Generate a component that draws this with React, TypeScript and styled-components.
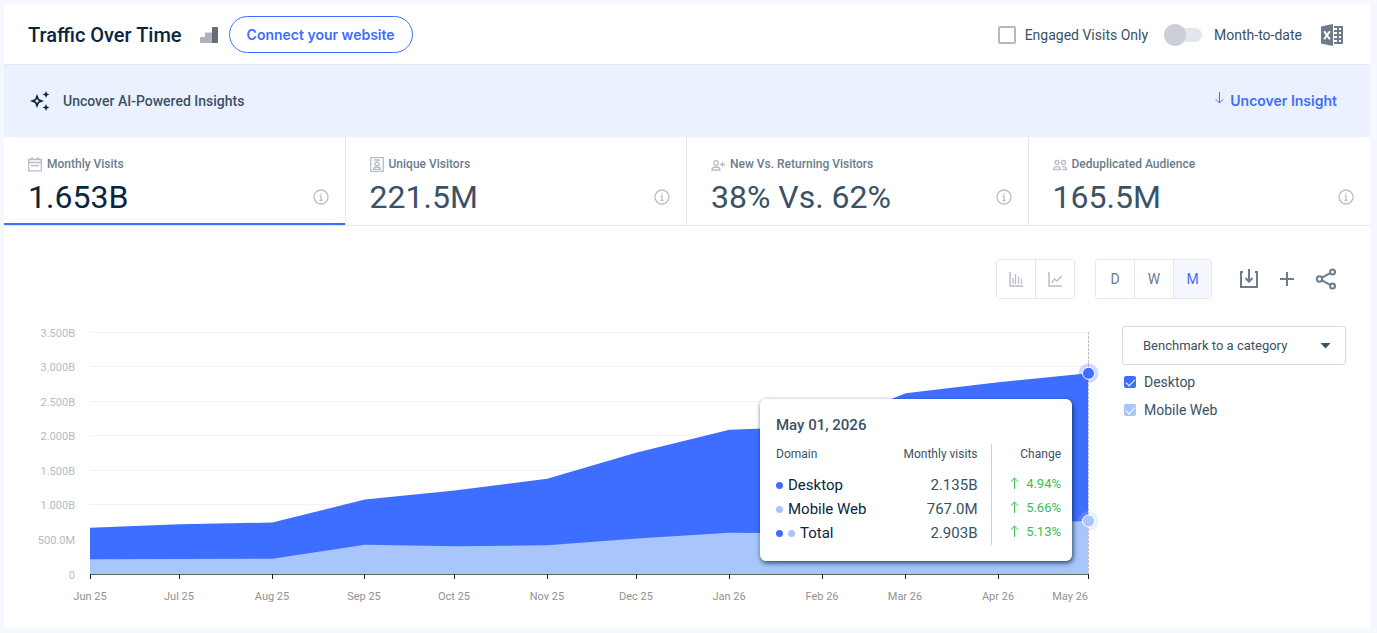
import React from 'react'
import styled, { createGlobalStyle } from 'styled-components'

const colors = {
  blue: '#3e6eff',
  lightBlue: '#a8c5fc',
  green: '#3bbd50',
  ink: '#092540',
  text: '#3a5166',
  muted: '#6b7c8c',
  icon: '#b8bec9',
  border: '#e5e7ea',
}

const GlobalStyle = createGlobalStyle`
  * {
    box-sizing: border-box;
  }

  body {
    background: #f5f8ff;
    color: ${colors.text};
    font-family: Roboto, 'Liberation Sans', sans-serif;
    font-size: 14px;
    margin: 0;
  }

  button,
  input,
  select {
    color: inherit;
    font: inherit;
    margin: 0;
  }

  svg {
    display: block;
    flex: none;
  }
`

const Card = styled.main`
  background: #fff;
  margin: 5px 7px 6px 4px;
`

const Header = styled.header`
  align-items: center;
  border-bottom: 1px solid ${colors.border};
  display: flex;
  height: 60px;
  justify-content: space-between;
  padding: 0 27px 0 24px;
`

const HeaderGroup = styled.div`
  align-items: center;
  display: flex;
`

const Title = styled.h1`
  color: ${colors.ink};
  font-size: 20px;
  font-weight: 500;
  line-height: 24px;
  margin: 0 18px 0 0;
`

const ConnectButton = styled.button`
  background: #fff;
  border: 1px solid ${colors.blue};
  border-radius: 20px;
  color: ${colors.blue};
  cursor: pointer;
  font-family: Inter, sans-serif;
  font-weight: 600;
  height: 37px;
  margin-left: 11px;
  padding: 0 17px;
`

const OptionLabel = styled.label`
  align-items: center;
  cursor: pointer;
  display: flex;
  gap: 9px;
`

const SquareCheckbox = styled.input`
  appearance: none;
  background: #fff;
  border: 2px solid #b0b8c9;
  border-radius: 2px;
  height: 18px;
  width: 18px;
`

const SwitchLabel = styled(OptionLabel)`
  gap: 12px;
  margin: 0 19px 0 16px;
`

const Switch = styled.input`
  align-items: center;
  appearance: none;
  background: #e4e7ea;
  border-radius: 7px;
  display: flex;
  height: 14px;
  width: 38px;

  &::before {
    background: #cbd0d6;
    border-radius: 100%;
    content: '';
    flex: none;
    height: 22px;
    width: 22px;
  }

  &:checked {
    justify-content: flex-end;
  }
`

const IconButton = styled.button`
  background: none;
  border: 0;
  cursor: pointer;
  padding: 0;
`

const Banner = styled.section`
  align-items: center;
  background: #ebf1ff;
  display: flex;
  height: 72px;
  padding: 0 33px 0 25px;
`

const BannerText = styled.span`
  flex: 1;
  font-weight: 500;
  margin-left: 12px;
`

const InsightLink = styled.a`
  align-items: center;
  color: ${colors.blue};
  display: flex;
  font-family: Inter, sans-serif;
  font-weight: 600;
  gap: 6px;
  padding-bottom: 2px;
  text-decoration: none;

  svg {
    margin-bottom: 4px;
  }
`

const Stats = styled.section`
  display: grid;
  grid-template-columns: repeat(4, 1fr);
`

const StatTab = styled.button<{ $active?: boolean }>`
  background: #fff;
  border: 0;
  border-bottom: 1px solid ${colors.border};
  border-right: 1px solid ${colors.border};
  box-shadow: ${({ $active }) =>
    $active ? `inset 0 -2px ${colors.blue}` : 'none'};
  color: ${({ $active }) => ($active ? colors.ink : colors.text)};
  cursor: pointer;
  display: flex;
  flex-direction: column;
  height: 89px;
  padding: 18px 16px 0 24px;
  text-align: left;

  &:last-child {
    border-right: 0;
  }
`

const StatLabel = styled.span`
  align-items: center;
  color: ${colors.muted};
  display: flex;
  font-size: 12px;
  font-weight: 500;
  gap: 5px;
  line-height: 18px;
`

const StatRow = styled.span`
  align-items: center;
  display: flex;
  font-size: 32px;
  justify-content: space-between;
  line-height: 48px;
  width: 100%;
`

const Body = styled.section`
  padding: 33px 24px 18px;
`

const Toolbar = styled.div`
  align-items: center;
  color: #6b7c8c;
  display: flex;
  justify-content: flex-end;
  padding-right: 9px;
`

const ButtonGroup = styled.div`
  border: 1px solid ${colors.border};
  border-radius: 3px;
  display: flex;
  height: 40px;
  margin-right: 20px;
`

const GroupButton = styled.button<{ $active?: boolean }>`
  align-items: center;
  background: ${({ $active }) => ($active ? '#f5f8ff' : '#fff')};
  border: 0;
  color: ${({ $active }) => ($active ? colors.blue : colors.muted)};
  cursor: pointer;
  display: flex;
  justify-content: center;
  padding: 0;
  width: 38px;

  & + & {
    border-left: 1px solid ${colors.border};
    width: 39px;
  }

  && + & + & {
    width: 38px;
  }
`

const Actions = styled.div`
  align-items: center;
  display: flex;
  gap: 19px;
  margin-left: 7px;
`

const ChartRow = styled.div`
  display: flex;
  gap: 20px;
  margin-top: 20px;
`

const ChartBox = styled.div`
  flex: 1;
  height: 290px;
  min-width: 0;
  position: relative;
`

const AxisText = styled.text<{ $vertical?: boolean }>`
  fill: ${({ $vertical }) => ($vertical ? '#b3bbc3' : '#919191')};
  font-size: 11px;
`

const Legend = styled.aside`
  padding-top: 7px;
  width: 224px;
`

const SelectBox = styled.div`
  align-items: center;
  border: 1px solid #d6dae0;
  border-radius: 3px;
  display: grid;
  height: 39px;
  margin-bottom: 3px;

  > * {
    grid-area: 1 / 1;
  }

  svg {
    justify-self: end;
    margin-right: 14px;
    pointer-events: none;
  }
`

const Select = styled.select`
  appearance: none;
  background: none;
  border: 0;
  cursor: pointer;
  font-size: 13px;
  height: 37px;
  padding: 0 20px;
  width: 100%;
`

const LegendItem = styled.label`
  align-items: center;
  cursor: pointer;
  display: flex;
  gap: 8px;
  height: 28px;
  padding-left: 2px;
`

const LegendCheckbox = styled.input<{ $color: string }>`
  appearance: none;
  background: ${({ $color }) => $color};
  border-radius: 2px;
  display: grid;
  height: 12px;
  place-content: center;
  width: 12px;

  &:checked::before {
    border: solid #fff;
    border-width: 0 0 1px 1px;
    content: '';
    height: 4px;
    margin-bottom: 2px;
    transform: rotate(-45deg);
    width: 8px;
  }
`

const Tooltip = styled.div`
  background: #fff;
  border-radius: 6px;
  box-shadow: 1px 2px 5px rgba(9, 37, 64, 0.8);
  height: 162px;
  padding: 16px 11px 0 16px;
  position: absolute;
  right: 30px;
  top: 80px;
  width: 312px;
`

const TooltipTitle = styled.div`
  font-size: 15px;
  font-weight: 500;
  line-height: 20px;
  margin-bottom: 9px;
`

const TooltipTable = styled.table`
  border-collapse: collapse;
  width: 100%;

  th {
    font-size: 12px;
    font-weight: 400;
    height: 29px;
    line-height: 20px;
    padding: 0;
    text-align: right;
    vertical-align: top;
  }

  th:first-child {
    text-align: left;
  }

  th:last-child {
    width: 70px;
  }

  td {
    font-size: 15px;
    height: 24px;
    line-height: 24px;
    padding: 0;
    text-align: right;
  }

  th:nth-child(2),
  td:nth-child(2) {
    border-right: 1px solid #ccd1d9;
    padding-right: 13px;
  }
`

const DomainCell = styled.span`
  align-items: center;
  color: ${colors.ink};
  display: flex;
  gap: 5px;
`

const Dot = styled.i<{ $color: string }>`
  background: ${({ $color }) => $color};
  border-radius: 100%;
  height: 7px;
  width: 7px;
`

const Change = styled.span`
  align-items: center;
  color: ${colors.green};
  display: flex;
  font-size: 13px;
  gap: 7px;
  justify-content: flex-end;
  line-height: 20px;
  padding-bottom: 3px;

  svg {
    margin-bottom: 2px;
  }
`

const SignalIcon = () => (
  <svg width="18" height="16" viewBox="0 0 18 16">
    <path d="M0 11a1 1 0 0 1 1-1h4V6.500a1 1 0 0 1 1-1h6V16H1a1 1 0 0 1-1-1z" fill="#adb3bd" />
    <path d="M12 1a1 1 0 0 1 1-1h4a1 1 0 0 1 1 1v14a1 1 0 0 1-1 1h-5z" fill="#646d7b" />
  </svg>
)

const ExcelIcon = () => (
  <svg width="22" height="22" viewBox="0 0 22 22">
    <path d="M0 2.500 12 0v22L0 19.500z" fill="#6b7c8c" />
    <path d="M3.200 7.200l5.600 8M8.800 7.200l-5.600 8" stroke="#fff" strokeWidth="2" />
    <path d="M13 2h8a1 1 0 0 1 1 1v16a1 1 0 0 1-1 1h-8z" fill="#6b7c8c" />
    <path
      d="M14 4h2v2h-2zM18 4h2v2h-2zM14 8h2v2h-2zM18 8h2v2h-2zM14 12h2v2h-2zM18 12h2v2h-2zM14 16h2v2h-2zM18 16h2v2h-2z"
      fill="#fff"
    />
    <path d="M13 4h1v2h-1zM13 8h1v2h-1zM13 12h1v2h-1zM13 16h1v2h-1z" fill="#fff" />
  </svg>
)

const SparkleIcon = () => (
  <svg width="22" height="22" viewBox="0 0 22 22" fill={colors.ink}>
    <path
      fillRule="evenodd"
      d="M8 4 10 9l5 2-5 2-2 5-2-5-5-2 5-2zM8 8.500 7.200 10.200 5.500 11l1.700.8.8 1.700.8-1.700L10.500 11l-1.700-.8z"
    />
    <path d="m17 1 1 2.500 2.500 1-2.500 1-1 2.500-1-2.500-2.500-1 2.500-1zM17 14l1 2.500 2.500 1-2.500 1-1 2.500-1-2.500-2.500-1 2.500-1z" />
  </svg>
)

const ArrowIcon = ({ down }: { down?: boolean }) => (
  <svg width="9" height="12" viewBox="0 0 9 12" fill="none" stroke="currentColor">
    {down ? (
      <path d="M4.500 0v11M.700 7.200l3.800 3.800 3.800-3.800" />
    ) : (
      <path d="M4.500 12V1M.700 4.800 4.500 1l3.800 3.800" />
    )}
  </svg>
)

const CalendarIcon = () => (
  <svg width="14" height="15" viewBox="0 0 14 15" fill="none" stroke={colors.icon}>
    <path d="M.7 2.500h12.600v11.300H.7zM1 5.500h12M3 8.500h8" strokeWidth="1.300" />
    <path d="M4 .5v2M10 .5v2" strokeWidth="2.500" />
  </svg>
)

const VisitorIcon = () => (
  <svg width="14" height="15" viewBox="0 0 14 15" fill="none" stroke={colors.icon} strokeWidth="1.300">
    <path d="M.7.7h12.600v13.600H.7zM4 3h6M3.500 12.300c0-1.800 1.500-2.300 3.500-2.300s3.500.5 3.500 2.300z" />
    <circle cx="7" cy="7" r="2" />
  </svg>
)

const NewVisitorIcon = () => (
  <svg width="14" height="15" viewBox="0 0 14 15" fill="none" stroke={colors.icon} strokeWidth="1.300">
    <circle cx="5" cy="6" r="2.300" />
    <path d="M1 13c0-2.500 1.700-3 4-3s4 .5 4 3zM11.500 5v5M9 7.500h5" />
  </svg>
)

const AudienceIcon = () => (
  <svg width="14" height="15" viewBox="0 0 14 15" fill="none" stroke={colors.icon} strokeWidth="1.300">
    <circle cx="4" cy="5.500" r="2" />
    <circle cx="10.500" cy="5.500" r="2" />
    <path d="M.7 12.500C.7 10 2 9.600 4 9.600s3.500.4 3.500 2.900zM9 9.600c3-.3 4.500.4 4.500 2.900h-4" />
  </svg>
)

const InfoIcon = () => (
  <svg width="16" height="16" viewBox="0 0 16 16" fill="none" stroke={colors.icon} strokeWidth="1.300">
    <circle cx="8" cy="8" r="7" />
    <path d="M6.500 7.200H8v4M6.500 11.500h3M8 4.200v1.300" />
  </svg>
)

const BarsIcon = () => (
  <svg width="14" height="15" viewBox="0 0 14 15" fill="none" stroke={colors.icon}>
    <path d="M1 0v14h13" strokeWidth="1.500" />
    <path d="M4 12V6M6.500 12V2M9.500 12V4.500M12.500 12V7" strokeWidth="1.300" />
  </svg>
)

const LineIcon = () => (
  <svg width="14" height="15" viewBox="0 0 14 15" fill="none" stroke={colors.icon}>
    <path d="M1 0v14h13" strokeWidth="1.500" />
    <path d="m3.500 11 3-4 2.500 2 4.500-5" strokeWidth="1.300" />
  </svg>
)

const DownloadIcon = () => (
  <svg width="20" height="20" viewBox="0 0 20 20" fill="none" stroke="currentColor" strokeWidth="2">
    <path d="M4 3H2v15h16V3h-2M10 0v12M6.500 9l3.500 3.500L13.500 9" />
  </svg>
)

const PlusIcon = () => (
  <svg width="18" height="18" viewBox="0 0 18 18" stroke="currentColor" strokeWidth="2">
    <path d="M9 2v14M2 9h14" />
  </svg>
)

const ShareIcon = () => (
  <svg width="22" height="22" viewBox="0 0 22 22" fill="none" stroke="currentColor" strokeWidth="2">
    <circle cx="4.500" cy="11" r="2.700" />
    <circle cx="17.500" cy="4" r="2.500" />
    <circle cx="17.500" cy="18" r="2.500" />
    <path d="m7 9.700 8.200-4.500M7 12.300l8.200 4.500" />
  </svg>
)

const CaretIcon = () => (
  <svg width="11" height="6" viewBox="0 0 11 6">
    <path d="M.5 0h10l-5 5.500z" fill={colors.text} />
  </svg>
)

// day: days since the first month, values in millions
const points = [
  { label: 'Jun 25', day: 0, mobile: 213, total: 668 },
  { label: 'Jul 25', day: 30, mobile: 217, total: 718 },
  { label: 'Aug 25', day: 61, mobile: 222, total: 744 },
  { label: 'Sep 25', day: 92, mobile: 422, total: 1077 },
  { label: 'Oct 25', day: 122, mobile: 400, total: 1206 },
  { label: 'Nov 25', day: 153, mobile: 417, total: 1376 },
  { label: 'Dec 25', day: 183, mobile: 515, total: 1757 },
  { label: 'Jan 26', day: 214, mobile: 595, total: 2088 },
  { label: 'Feb 26', day: 245, mobile: 590, total: 2130 },
  { label: 'Mar 26', day: 273, mobile: 700, total: 2615 },
  { label: 'Apr 26', day: 304, mobile: 726, total: 2775 },
  { label: 'May 26', day: 334, mobile: 767, total: 2903 },
]

const gridLabels = [
  '0',
  '500.0M',
  '1.000B',
  '1.500B',
  '2.000B',
  '2.500B',
  '3.000B',
  '3.500B',
]

const plot = { left: 62, right: 14, top: 13, bottom: 255 }

const yOf = (value: number) =>
  plot.bottom - (value / 3500) * (plot.bottom - plot.top)

const tooltipRows = [
  { name: 'Desktop', dots: [colors.blue], visits: '2.135B', change: '4.94%' },
  { name: 'Mobile Web', dots: [colors.lightBlue], visits: '767.0M', change: '5.66%' },
  { name: 'Total', dots: [colors.blue, colors.lightBlue], visits: '2.903B', change: '5.13%' },
]

const TrafficChart: React.FunctionComponent = () => {
  const box = React.useRef<HTMLDivElement>(null)
  const [width, setWidth] = React.useState(1074)

  React.useLayoutEffect(() => {
    const node = box.current
    if (!node) return
    const update = () => setWidth(node.clientWidth)
    update()
    const observer = new ResizeObserver(update)
    observer.observe(node)
    return () => observer.disconnect()
  }, [])

  const end = width - plot.right
  const xOf = (day: number) => plot.left + (day / 334) * (end - plot.left)
  const area = (key: 'mobile' | 'total') =>
    `M${plot.left} ${plot.bottom}` +
    points.map(p => `L${xOf(p.day)} ${yOf(p[key])}`).join('') +
    `L${end} ${plot.bottom}Z`

  return (
    <ChartBox ref={box}>
      <svg width={width} height="290">
        {gridLabels.map((label, i) => {
          const y = Math.floor(yOf(i * 500)) + 0.5
          return (
            <g key={label}>
              <line x1={plot.left} x2={end} y1={y} y2={y} stroke="#f2f2f2" />
              <AxisText $vertical x={plot.left - 15} y={y + 4.5} textAnchor="end">
                {label}
              </AxisText>
            </g>
          )
        })}
        <path d={area('total')} fill={colors.blue} />
        <path d={area('mobile')} fill={colors.lightBlue} />
        <path d={`M${plot.left} 255.500H${end + 1}`} stroke="#666" />
        {points.map((p, i) => {
          const x = Math.floor(xOf(p.day)) + 0.5
          const last = i === points.length - 1
          return (
            <g key={p.label}>
              <line x1={x} x2={x} y1="255" y2="260" stroke="#222" />
              <AxisText
                x={last ? end : Math.floor(x)}
                y="281"
                textAnchor={last ? 'end' : 'middle'}
              >
                {p.label}
              </AxisText>
            </g>
          )
        })}
        <path d={`M${end + 0.5} 13V255`} stroke="#c4c4c8" strokeDasharray="3 1" />
        <circle cx={end + 0.5} cy={yOf(2903)} r="10" fill={colors.blue} opacity="0.25" />
        <circle cx={end + 0.5} cy={yOf(2903)} r="6" fill={colors.blue} stroke="#fff" />
        <circle cx={end + 0.5} cy={yOf(767)} r="10" fill={colors.lightBlue} opacity="0.25" />
        <circle cx={end + 0.5} cy={yOf(767)} r="6" fill={colors.lightBlue} stroke="#fff" />
      </svg>
      <Tooltip role="tooltip">
        <TooltipTitle>May 01, 2026</TooltipTitle>
        <TooltipTable>
          <thead>
            <tr>
              <th>Domain</th>
              <th>Monthly visits</th>
              <th>Change</th>
            </tr>
          </thead>
          <tbody>
            {tooltipRows.map(row => (
              <tr key={row.name}>
                <td>
                  <DomainCell>
                    {row.dots.map(color => (
                      <Dot key={color} $color={color} />
                    ))}
                    {row.name}
                  </DomainCell>
                </td>
                <td>{row.visits}</td>
                <td>
                  <Change>
                    <ArrowIcon />
                    {row.change}
                  </Change>
                </td>
              </tr>
            ))}
          </tbody>
        </TooltipTable>
      </Tooltip>
    </ChartBox>
  )
}

const stats = [
  { label: 'Monthly Visits', value: '1.653B', Icon: CalendarIcon },
  { label: 'Unique Visitors', value: '221.5M', Icon: VisitorIcon },
  { label: 'New Vs. Returning Visitors', value: '38% Vs. 62%', Icon: NewVisitorIcon },
  { label: 'Deduplicated Audience', value: '165.5M', Icon: AudienceIcon },
]

const App: React.FunctionComponent = () => {
  const [activeStat, setActiveStat] = React.useState(0)
  const [period, setPeriod] = React.useState('M')

  return (
    <>
      <GlobalStyle />
      <Card>
        <Header>
          <HeaderGroup>
            <Title>Traffic Over Time</Title>
            <SignalIcon />
            <ConnectButton type="button">Connect your website</ConnectButton>
          </HeaderGroup>
          <HeaderGroup>
            <OptionLabel htmlFor="engaged">
              <SquareCheckbox id="engaged" type="checkbox" />
              Engaged Visits Only
            </OptionLabel>
            <SwitchLabel htmlFor="mtd">
              <Switch id="mtd" type="checkbox" role="switch" />
              Month-to-date
            </SwitchLabel>
            <IconButton type="button" aria-label="Export to Excel">
              <ExcelIcon />
            </IconButton>
          </HeaderGroup>
        </Header>
        <Banner>
          <SparkleIcon />
          <BannerText>Uncover AI-Powered Insights</BannerText>
          <InsightLink href="#insight">
            <ArrowIcon down />
            Uncover Insight
          </InsightLink>
        </Banner>
        <Stats>
          {stats.map(({ label, value, Icon }, i) => (
            <StatTab
              key={label}
              type="button"
              $active={i === activeStat}
              onClick={() => setActiveStat(i)}
            >
              <StatLabel>
                <Icon />
                {label}
              </StatLabel>
              <StatRow>
                {value}
                <InfoIcon />
              </StatRow>
            </StatTab>
          ))}
        </Stats>
        <Body>
          <Toolbar>
            <ButtonGroup>
              <GroupButton type="button" aria-label="Bar chart">
                <BarsIcon />
              </GroupButton>
              <GroupButton type="button" aria-label="Line chart">
                <LineIcon />
              </GroupButton>
            </ButtonGroup>
            <ButtonGroup>
              {['D', 'W', 'M'].map(name => (
                <GroupButton
                  key={name}
                  type="button"
                  $active={name === period}
                  onClick={() => setPeriod(name)}
                >
                  {name}
                </GroupButton>
              ))}
            </ButtonGroup>
            <Actions>
              <IconButton type="button" aria-label="Download">
                <DownloadIcon />
              </IconButton>
              <IconButton type="button" aria-label="Add">
                <PlusIcon />
              </IconButton>
              <IconButton type="button" aria-label="Share">
                <ShareIcon />
              </IconButton>
            </Actions>
          </Toolbar>
          <ChartRow>
            <TrafficChart />
            <Legend>
              <SelectBox>
                <Select aria-label="Benchmark">
                  <option>Benchmark to a category</option>
                </Select>
                <CaretIcon />
              </SelectBox>
              <LegendItem htmlFor="desktop">
                <LegendCheckbox
                  id="desktop"
                  type="checkbox"
                  defaultChecked
                  $color={colors.blue}
                />
                Desktop
              </LegendItem>
              <LegendItem htmlFor="mobile">
                <LegendCheckbox
                  id="mobile"
                  type="checkbox"
                  defaultChecked
                  $color={colors.lightBlue}
                />
                Mobile Web
              </LegendItem>
            </Legend>
          </ChartRow>
        </Body>
      </Card>
    </>
  )
}

export default App
